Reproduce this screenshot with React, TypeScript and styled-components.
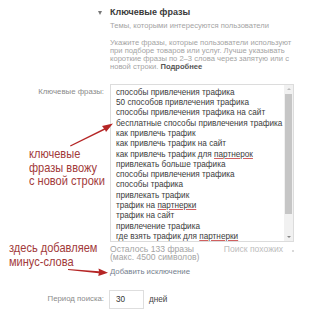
import React from "react";
import styled, { createGlobalStyle } from "styled-components";

const Global = createGlobalStyle`
  html, body { margin: 0; padding: 0; background: #fff; }
  body { width: 327px; height: 320px; overflow: hidden; font-family: "Liberation Sans", Arial, sans-serif; }
  * { box-sizing: border-box; }
`;

const Page = styled.div`
  position: relative;
  width: 327px;
  height: 320px;
  padding-top: 6px;
`;

const Form = styled.div`
  display: grid;
  grid-template-columns: 104px 184px;
  column-gap: 6px;
  align-items: start;
`;

const Toggle = styled.div`
  justify-self: end;
  margin-right: 2px;
  margin-top: 5px;
  width: 0;
  height: 0;
  border-left: 2.5px solid transparent;
  border-right: 2.5px solid transparent;
  border-top: 4px solid #777;
`;

const Title = styled.div`
  font-size: 9px;
  font-weight: 700;
  line-height: 13px;
  color: #3a3a3a;
`;

const Hint = styled.div<{ $top?: number; $size?: number; $lh?: number }>`
  font-size: ${(p) => p.$size ?? 7.6}px;
  line-height: ${(p) => p.$lh ?? 8.2}px;
  color: #a4a4a4;
  margin-top: ${(p) => p.$top ?? 0}px;
  white-space: nowrap;
  b { color: #555; font-weight: 700; }
`;

const Label = styled.div<{ $top?: number }>`
  justify-self: end;
  font-size: 7.8px;
  line-height: 10px;
  color: #8a8a8a;
  margin-top: ${(p) => p.$top ?? 0}px;
  white-space: nowrap;
`;

const Cell = styled.div<{ $top?: number }>`
  margin-top: ${(p) => p.$top ?? 0}px;
`;

const Area = styled.div`
  position: relative;
  height: 158px;
  border: 1px solid #dcdcdc;
  padding: 3px 0 0 5px;
  overflow: hidden;
`;

const Line = styled.div`
  font-size: 8.2px;
  line-height: 10.3px;
  color: #3c3c3c;
  white-space: nowrap;
`;

const Misspelled = styled.span`
  text-decoration: underline;
  text-decoration-color: #d06060;
  text-underline-offset: 1px;
`;

const Scroll = styled.div`
  position: absolute;
  top: 0;
  right: 0;
  bottom: 0;
  width: 9px;
  background: #f1f1f1;
  display: flex;
  flex-direction: column;
  align-items: center;
`;

const ScrollArrow = styled.div<{ $down?: boolean }>`
  height: 8px;
  width: 100%;
  display: flex;
  align-items: center;
  justify-content: center;
  &::before {
    content: "";
    width: 0;
    height: 0;
    border-left: 2px solid transparent;
    border-right: 2px solid transparent;
    ${(p) => (p.$down ? "border-top: 2.5px solid #888;" : "border-bottom: 2.5px solid #bbb;")}
  }
`;

const Thumb = styled.div`
  width: 7px;
  height: 120px;
  background: #c6c6c6;
  margin-top: 1px;
`;

const Spacer = styled.div`
  flex: 1;
`;

const InfoRow = styled.div`
  display: flex;
  justify-content: space-between;
  align-items: flex-start;
  margin-top: 3px;
`;

const Similar = styled.div`
  font-size: 8.6px;
  line-height: 8.5px;
  color: #bdbdbd;
  display: flex;
  gap: 9px;
  align-items: center;
  white-space: nowrap;
`;

const Dot = styled.span`
  width: 2px;
  height: 2px;
  border-radius: 50%;
  background: #ccc;
  margin-top: 4px;
`;

const Link = styled.div`
  font-size: 7.8px;
  line-height: 10px;
  color: #75808e;
  margin-top: 5px;
`;

const PeriodRow = styled.div`
  display: flex;
  align-items: center;
  gap: 5px;
  margin-top: 13px;
  margin-left: -1px;
`;

const NumInput = styled.div`
  width: 35px;
  height: 19px;
  border: 1px solid #dedede;
  font-size: 8.2px;
  color: #333;
  padding-left: 6px;
  display: flex;
  align-items: center;
`;

const Days = styled.span`
  font-size: 8.2px;
  color: #444;
`;

const Note = styled.div<{ $x: number; $y: number }>`
  position: absolute;
  left: ${(p) => p.$x}px;
  top: ${(p) => p.$y}px;
  font-family: "Liberation Sans Narrow", "Liberation Sans", Arial, sans-serif;
  font-size: 13px;
  line-height: 13.5px;
  color: #a23a3a;
  white-space: nowrap;
  transform: scaleX(0.85);
  transform-origin: left top;
`;

const Overlay = styled.svg`
  position: absolute;
  left: 0;
  top: 0;
  pointer-events: none;
`;

const phrases: React.ReactNode[] = [
  "способы привлечения трафика",
  "50 способов привлечения трафика",
  "способы привлечения трафика на сайт",
  "бесплатные способы привлечения трафика",
  "как привлечь трафик",
  "как привлечь трафик на сайт",
  <>как привлечь трафик для <Misspelled>партнерок</Misspelled></>,
  "привлекать больше трафика",
  "способы привлечения трафика",
  "способы трафика",
  "привлекать трафик",
  <>трафик на <Misspelled>партнерки</Misspelled></>,
  "трафик на сайт",
  "привлечение трафика",
  <>где взять трафик для <Misspelled>партнерки</Misspelled></>,
];

export default function App() {
  return (
    <Page>
      <Global />
      <Form>
        <Toggle />
        <Title>Ключевые фразы</Title>

        <div />
        <Hint $top={1.5} $lh={10}>Темы, которыми интересуются пользователи</Hint>

        <div />
        <Hint $top={8}>
          Укажите фразы, которые пользователи используют
          <br />
          при подборе товаров или услуг. Лучше указывать
          <br />
          короткие фразы по 2–3 слова через запятую или с
          <br />
          новой строки. <b>Подробнее</b>
        </Hint>

        <Label $top={16}>Ключевые фразы:</Label>
        <Cell $top={12.5}>
          <Area>
            {phrases.map((p, i) => (
              <Line key={i}>{p}</Line>
            ))}
            <Scroll>
              <ScrollArrow />
              <Thumb />
              <Spacer />
              <ScrollArrow $down />
            </Scroll>
          </Area>
          <InfoRow>
            <Hint $size={8.6} $lh={8.5}>
              Осталось 133 фразы
              <br />
              (макс. 4500 символов)
            </Hint>
            <Similar>
              Поиск похожих
              <Dot />
            </Similar>
          </InfoRow>
          <Link>Добавить исключение</Link>
        </Cell>

        <Label $top={17}>Период поиска:</Label>
        <PeriodRow>
          <NumInput>30</NumInput>
          <Days>дней</Days>
        </PeriodRow>
      </Form>

      <Note $x={29} $y={147}>
        ключевые
        <br />
        фразы ввожу
        <br />с новой строки
      </Note>
      <Note $x={9} $y={241}>
        здесь добавляем
        <br />
        минус-слова
      </Note>

      <Overlay width="327" height="320" viewBox="0 0 327 320">
        <path d="M70 145.5 L104 128.5 L102 126 L113 123.5 L106 132 L105 129.8 L70.6 146.4 Z" fill="#b52525" />
        <path d="M68 269 L99 271.3 L98.5 268.5 L108 272.8 L98.3 276 L98.8 273.3 L68 270 Z" fill="#b52525" />
      </Overlay>
    </Page>
  );
}
